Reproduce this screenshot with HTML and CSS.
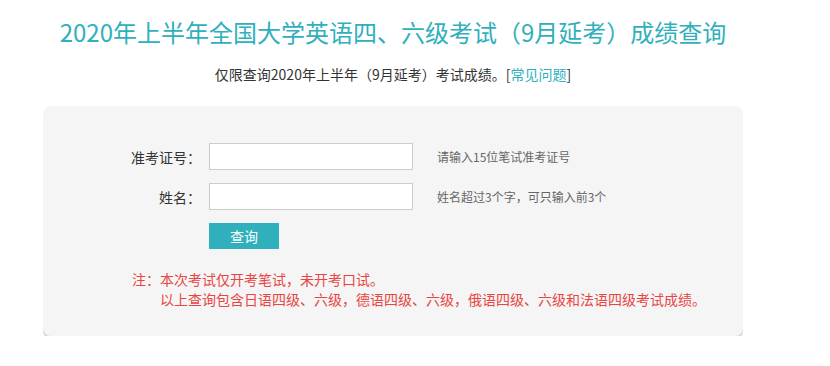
FILE: index.html
```html
<!DOCTYPE html>
<html>

<head>
    <meta charset="UTF-8">
    <title>成绩查询</title>
    <link rel="stylesheet" href="styles.css">
</head>

<body>
    <div class="wrap">
        <h1 class="title">2020年上半年全国大学英语四、六级考试（9月延考）成绩查询</h1>
        <p class="sub">仅限查询2020年上半年（9月延考）考试成绩。[<a href="#">常见问题</a>]</p>
        <div class="box">
            <div class="row">
                <label class="label">准考证号：</label>
                <input class="field" type="text">
                <span class="hint">请输入15位笔试准考证号</span>
            </div>
            <div class="row">
                <label class="label">姓名：</label>
                <input class="field" type="text">
                <span class="hint">姓名超过3个字，可只输入前3个</span>
            </div>
            <div class="row">
                <button class="btn">查询</button>
            </div>
            <div class="note">
                <p>注：本次考试仅开考笔试，未开考口试。</p>
                <p class="indent">以上查询包含日语四级、六级，德语四级、六级，俄语四级、六级和法语四级考试成绩。</p>
            </div>
        </div>
    </div>
</body>

</html>
```

FILE: styles.css
```css
* {
    margin: 0;
    padding: 0;
    border: none;
}

body {
    font-family: "Noto Sans CJK SC", "Noto Sans", sans-serif;
    color: #333;
    background: #fff;
}

.wrap {
    width: 700px;
    margin-left: 43px;
}

.title {
    margin-top: 16px;
    font-size: 24px;
    line-height: 32px;
    font-weight: normal;
    color: #2fb0bc;
    text-align: center;
    white-space: nowrap;
}

.sub {
    margin-top: 16px;
    font-size: 14px;
    line-height: 20px;
    text-align: center;
}

.sub a {
    color: #2fb0bc;
    text-decoration: none;
}

.box {
    margin-top: 22px;
    padding: 37px 0 27px;
    background: #f5f5f5;
    border-radius: 8px;
    box-shadow: 0 3px 0 #d9d9d9;
}

.row {
    display: flex;
    align-items: center;
    margin-bottom: 13px;
    padding-left: 166px;
}

.row:nth-child(-n+2) {
    padding-left: 0;
}

.label {
    width: 158px;
    text-align: right;
    font-size: 14px;
}

.field {
    width: 204px;
    height: 27px;
    box-sizing: border-box;
    margin-left: 8px;
    border: 1px solid #cccccc;
    background: #fff;
}

.hint {
    margin-left: 24px;
    font-size: 12px;
    color: #666;
}

.btn {
    width: 70px;
    height: 26px;
    background: #2fb0bc;
    color: #fff;
    font-family: inherit;
    font-size: 14px;
}

.note {
    margin-top: 20px;
    padding-left: 89px;
    font-size: 14px;
    line-height: 20px;
    color: #e84444;
}

.note .indent {
    padding-left: 28px;
}
```
